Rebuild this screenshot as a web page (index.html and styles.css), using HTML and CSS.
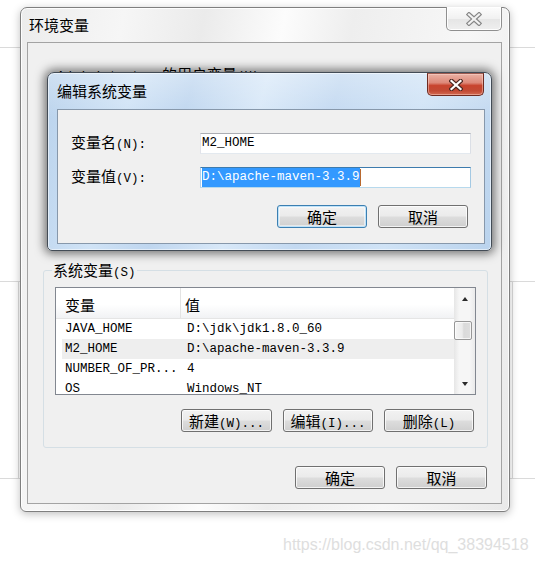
FILE: index.html
```html
<!DOCTYPE html>
<html lang="zh-CN">
<head>
<meta charset="utf-8">
<title>环境变量</title>
<link rel="stylesheet" href="styles.css">
</head>
<body>
<div class="desktop">
  <div class="bg-line line-a"></div>
  <div class="bg-line line-b"></div>
  <div class="bg-line line-c"></div>
  <div class="bg-col col-l"></div>
  <div class="bg-col col-r"></div>

  <section class="win">
    <header class="win-title">
      <span class="caption">环境变量</span>
      <button class="close close-gray" aria-label="关闭">
        <svg width="16" height="14" viewBox="0 0 16 14"><path class="x-out gray" d="M3 2.5 L13 11.5 M13 2.5 L3 11.5"/><path class="x-in gray" d="M3 2.5 L13 11.5 M13 2.5 L3 11.5"/></svg>
      </button>
    </header>
    <div class="win-client">
      <div class="user-label"><span class="h">Administrator </span>的用户变量<span class="h">(U)</span></div>
      <fieldset class="group">
        <legend>系统变量<span class="h">(S)</span></legend>
        <div class="list">
          <div class="list-main">
            <div class="list-head"><div class="hc1">变量</div><div class="hc2">值</div></div>
            <div class="row"><span class="c1">JAVA_HOME</span><span class="c2">D:\jdk\jdk1.8.0_60</span></div>
            <div class="row sel"><span class="c1">M2_HOME</span><span class="c2">D:\apache-maven-3.3.9</span></div>
            <div class="row"><span class="c1">NUMBER_OF_PR...</span><span class="c2">4</span></div>
            <div class="row"><span class="c1">OS</span><span class="c2">Windows_NT</span></div>
          </div>
          <div class="sbar">
            <div class="sbtn"><span class="tri up"></span></div>
            <div class="strack"><div class="thumb"></div></div>
            <div class="sbtn"><span class="tri down"></span></div>
          </div>
        </div>
        <div class="btns group-btns">
          <button class="btn w91">新建<span class="h">(W)...</span></button>
          <button class="btn">编辑<span class="h">(I)...</span></button>
          <button class="btn">删除<span class="h">(L)</span></button>
        </div>
      </fieldset>
      <div class="btns main-btns">
        <button class="btn">确定</button>
        <button class="btn w91">取消</button>
      </div>
    </div>
  </section>

  <section class="dlg">
    <header class="dlg-title">
      <span class="caption">编辑系统变量</span>
      <button class="close close-red" aria-label="关闭">
        <svg width="14" height="12" viewBox="0 0 14 12"><path class="x-out red" d="M2.5 2 L11.5 10 M11.5 2 L2.5 10"/><path class="x-in red" d="M2.5 2 L11.5 10 M11.5 2 L2.5 10"/></svg>
      </button>
    </header>
    <div class="dlg-client">
      <div class="field">
        <label class="flabel">变量名<span class="h">(N):</span></label>
        <div class="input">M2_HOME</div>
      </div>
      <div class="field">
        <label class="flabel">变量值<span class="h">(V):</span></label>
        <div class="input focus"><span class="selected">D:\apache-maven-3.3.9</span><span class="caret"></span></div>
      </div>
      <div class="btns dlg-btns">
        <button class="btn default">确定</button>
        <button class="btn">取消</button>
      </div>
    </div>
  </section>

  <div class="watermark">https://blog.csdn.net/qq_38394518</div>
</div>
</body>
</html>
```

FILE: styles.css
```css
* { box-sizing: border-box; }
html, body { margin: 0; padding: 0; }
body {
  width: 535px; height: 564px; overflow: hidden; background: #fff;
  font-family: "Noto Sans CJK SC", "Noto Sans", sans-serif;
  font-size: 15px; color: #000;
}
.desktop { position: relative; width: 535px; height: 564px; }
.h { font-family: "Liberation Mono", monospace; font-size: 12.5px; }

/* background page lines */
.bg-line { position: absolute; left: 0; width: 535px; height: 1px; background: #dadada; }
.line-a { top: 47px; }
.line-b { top: 281px; }
.line-c { top: 478px; }
.bg-col { position: absolute; top: 281px; width: 1px; height: 198px; background: #dadada; }
.col-l { left: 18px; }
.col-r { left: 512px; }

/* outer window */
.win {
  position: absolute; left: 20px; top: 7px; width: 490px; height: 505px;
  display: flex; flex-direction: column;
  padding: 0 7px 7px 6px;
  border: 1px solid #7f7f7f; border-radius: 7px 7px 6px 6px;
  background: linear-gradient(100deg, #ececec 0%, #f6f6f6 18%, #ebebeb 32%, #fcfcfc 46%, #eeeeee 58%, #f7f7f7 78%, #e9e9e9 100%);
  box-shadow: inset 0 0 0 1px rgba(255,255,255,.85), 0 2px 9px rgba(0,0,0,.25);
}
.win-title { height: 34px; display: flex; align-items: center; padding-left: 2px; }
.caption { line-height: 18px; white-space: nowrap; }

.close {
  position: absolute; top: -1px; padding: 0;
  display: flex; align-items: center; justify-content: center;
}
.close-gray {
  right: 7px; width: 56px; height: 24px;
  border: 1px solid #8f8f8f; border-top: none; border-radius: 0 0 5px 5px;
  background: linear-gradient(#fdfdfd, #f1f1f1 50%, #e5e5e5 51%, #efefef);
  box-shadow: inset 0 0 0 1px rgba(255,255,255,.9);
}
.close-red {
  top: 0; right: 7px; width: 57px; height: 23px;
  border: 1px solid #6e2a20; border-top-color: #9b5a50; border-radius: 0 0 5px 5px;
  background: linear-gradient(#eab1a4 0%, #dd8878 42%, #c8442e 55%, #c24a34 80%, #d36a52 100%);
  box-shadow: inset 0 0 0 1px rgba(255,220,210,.45);
}
.x-out { fill: none; stroke-width: 4.4; stroke-linecap: square; }
.x-in { fill: none; stroke-width: 2.2; stroke-linecap: square; }
.x-out.gray { stroke: #858585; }
.x-in.gray { stroke: #f2f2f2; }
.x-out.red { stroke: #4b2620; }
.x-in.red { stroke: #ffffff; }

.win-client {
  flex: 1; display: flex; flex-direction: column;
  border: 1px solid #a3a3a3; background: #f0f0f0;
}
.user-label { margin-top: 22px; padding-left: 29px; height: 18px; line-height: 18px; white-space: nowrap; }

.group {
  margin: 178px 13px 0 15px;
  padding: 8px 11px 15px 11px;
  border: 1px solid #d5dfe5; border-radius: 3px;
  min-width: 0;
}
.group legend { padding: 0 1px; margin-left: -3px; height: 18px; line-height: 18px; white-space: nowrap; }

.list { display: flex; height: 108px; border: 1px solid #828790; background: #fff; }
.list-main { flex: 1; min-width: 0; overflow: hidden; }
.list-head {
  display: flex; height: 31px; line-height: 33px;
  border-bottom: 1px solid #e5e5e5;
  background: linear-gradient(#fff 0%, #fff 55%, #f1f2f4 100%);
}
.hc1 { width: 125px; padding-left: 9px; border-right: 1px solid #e3e3e3; overflow: hidden; }
.hc2 { padding-left: 4px; overflow: hidden; }
.row {
  display: flex; height: 20px; line-height: 20px;
  margin-left: 6px; padding-left: 3px;
  font-family: "Liberation Mono", monospace; font-size: 12.5px; white-space: nowrap;
}
.row .c1 { width: 122px; flex: none; }
.row.sel { background: #eeeeee; }

.sbar {
  width: 21px; flex: none; display: flex; flex-direction: column;
  background: linear-gradient(90deg, #e6e6e6, #f6f6f6 25%, #f6f6f6 75%, #eaeaea);
}
.sbtn { height: 21px; display: flex; align-items: center; justify-content: center; }
.strack { flex: 1; padding-top: 12px; }
.thumb {
  width: 18px; height: 19px;
  border: 1px solid #979797; border-radius: 2px;
  background: linear-gradient(90deg, #f5f5f5, #ebebeb 45%, #dadada 55%, #dedede);
  box-shadow: inset 0 0 0 1px rgba(255,255,255,.7);
}
.tri { width: 0; height: 0; border-left: 3.5px solid transparent; border-right: 3.5px solid transparent; }
.tri.up { border-bottom: 4px solid #2a2a2a; }
.tri.down { border-top: 4px solid #2a2a2a; }

.btns { display: flex; justify-content: flex-end; gap: 11px; }
.group-btns { margin-top: 14px; padding-right: 2px; }
.main-btns { margin-top: 18px; padding-right: 14px; }
.btn {
  width: 90px; height: 23px; padding: 0;
  border: 1px solid #707070; border-radius: 3px;
  background: linear-gradient(#f2f2f2 0%, #ebebeb 48%, #dddddd 52%, #cfcfcf 100%);
  box-shadow: inset 0 0 0 1px rgba(255,255,255,.75);
  font-family: inherit; font-size: 15px; line-height: 21px; color: #000; white-space: nowrap;
}
.btn.w91 { width: 91px; }
.btn.default {
  border-color: #3c7fb1;
  box-shadow: inset 0 0 0 1px #bfe3fa, inset 0 0 0 2px rgba(255,255,255,.5);
}

/* edit dialog */
.dlg {
  position: absolute; left: 47px; top: 72px; width: 445px; height: 179px;
  display: flex; flex-direction: column;
  padding: 0 6px 6px 9px;
  border: 1px solid #434c56; border-radius: 7px 7px 5px 5px;
  background:
    linear-gradient(180deg, rgba(255,255,255,.3), rgba(255,255,255,0) 25%),
    linear-gradient(105deg, #b9d2ec 0%, #d0e3f6 18%, #bfd6ef 30%, #d8e8f8 45%, #c3d9f1 60%, #d0e3f6 78%, #bad3ed 100%);
  box-shadow: inset 0 0 0 1px rgba(255,255,255,.55), 0 0 10px 3px rgba(0,0,0,.5);
}
.dlg-title { height: 36px; display: flex; align-items: center; }
.dlg-client {
  flex: 1; display: flex; flex-direction: column;
  padding-top: 23px;
  border: 1px solid #8798ab; background: #f0f0f0;
}
.field { display: flex; align-items: center; height: 21px; }
.field + .field { margin-top: 13px; }
.flabel { width: 142px; flex: none; padding-left: 13px; line-height: 18px; white-space: nowrap; }
.input {
  width: 271px; height: 21px; flex: none;
  display: flex; align-items: center;
  padding-left: 1px;
  border: 1px solid; border-color: #abadb3 #dbdfe6 #e3e9ef #e2e3ea;
  background: #fff;
  font-family: "Liberation Mono", monospace; font-size: 12.5px; line-height: 19px; white-space: nowrap;
}
.input.focus { border-color: #3d7bad #a4c9e3 #b7d9ed #b5cfe7; }
.selected { display: block; height: 19px; line-height: 19px; background: #3399ff; color: #fff; }
.caret { display: block; width: 1px; height: 17px; background: #b8692f; }
.dlg-btns { margin-top: 17px; padding-right: 16px; }

.watermark {
  position: absolute; left: 283px; top: 536px;
  font-family: "Liberation Sans", Arial, sans-serif; font-size: 16px; line-height: 18px;
  color: #dedede; white-space: nowrap;
}
```
